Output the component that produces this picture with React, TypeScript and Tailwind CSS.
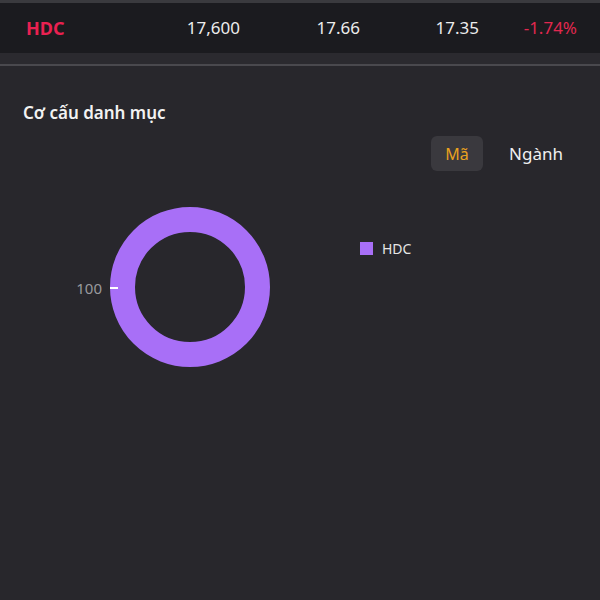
import React from 'react';

const font = { fontFamily: '"Noto Sans", "Open Sans", sans-serif' };

// Donut ring for the portfolio structure
function Donut() {
  return (
    <svg width="260" height="180" viewBox="0 0 260 180">
      <circle cx="130" cy="88" r="67.5" fill="none" stroke="#a86ff7" strokeWidth="25" />
      <line x1="50" y1="89" x2="58" y2="89" stroke="#ffffff" strokeWidth="2" />
      <text x="42" y="95" textAnchor="end" fill="#9a9a9e" fontSize="15" style={font}>
        100
      </text>
    </svg>
  );
}

export default function App() {
  return (
    <div className="w-[600px] h-[600px] bg-[#28272c] flex flex-col overflow-hidden" style={font}>
      <div className="h-[3px] bg-[#3a3a3e]" />
      <div className="h-[50px] bg-[#1b1b1f] flex items-center text-[17px] text-[#ececec]">
        <div className="w-[160px] pl-[26px] font-bold text-[18px] text-[#ea2151]">HDC</div>
        <div className="w-[80px] text-right">17,600</div>
        <div className="w-[120px] text-right">17.66</div>
        <div className="w-[119px] text-right">17.35</div>
        <div className="w-[98px] text-right text-[#e1284f]">-1.74%</div>
      </div>
      <div className="h-[11px] bg-[#2b2a2f]" />
      <div className="h-[2px] bg-[#4a494e]" />

      <div className="px-[23px] pt-[38px]">
        <h2 className="text-[17px] font-semibold text-[#f2f2f2] leading-none">Cơ cấu danh mục</h2>
        <div className="flex justify-end items-center mt-[15px] pr-[14px]">
          <button className="w-[52px] h-[35px] rounded-md bg-[#3a393e] text-[#e9a11f] text-[16px]">Mã</button>
          <button className="ml-[26px] h-[35px] text-[#f0f0f0] text-[17px]">Ngành</button>
        </div>
        <div className="flex mt-[28px]">
          <div className="ml-[37px]">
            <Donut />
          </div>
          <div className="ml-[40px] mt-[39px] flex items-start gap-[9px]">
            <div className="w-[13px] h-[13px] mt-[4px] bg-[#a86ff7]" />
            <span className="text-[14px] text-[#e6e6e6]">HDC</span>
          </div>
        </div>
      </div>
    </div>
  );
}
